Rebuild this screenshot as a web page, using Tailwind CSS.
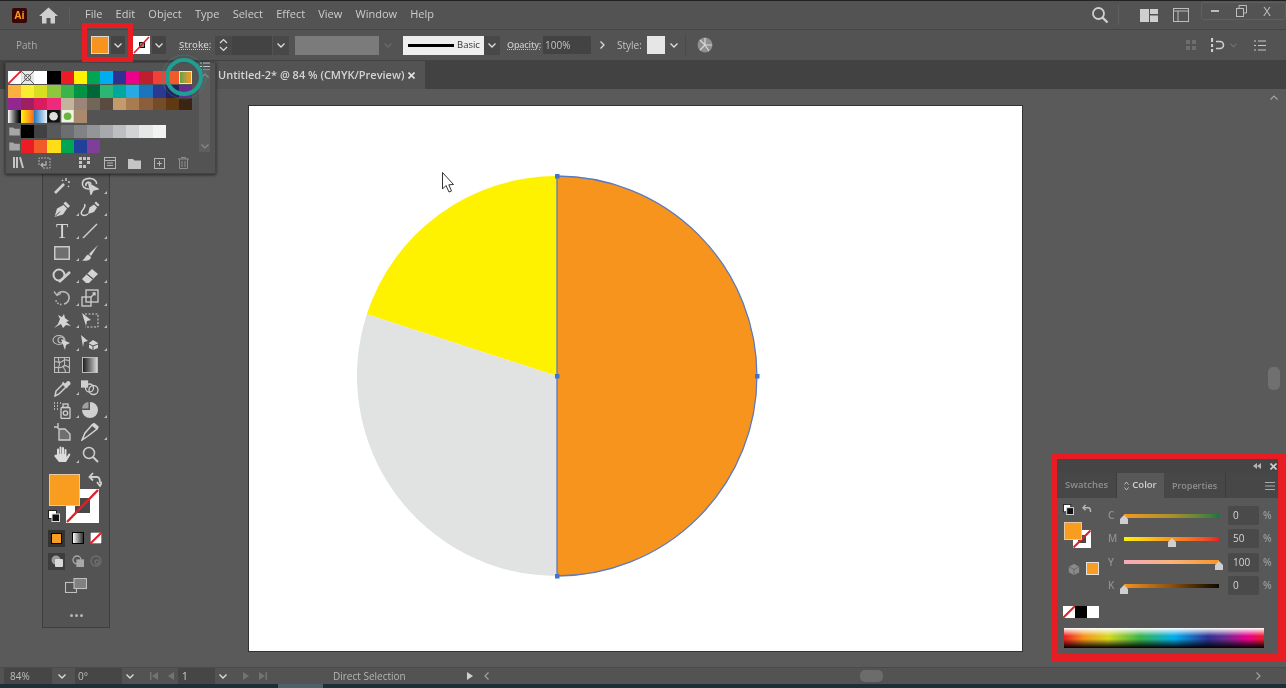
<!DOCTYPE html>
<html>
<head>
<meta charset="utf-8">
<script src="https://cdn.jsdelivr.net/npm/@tailwindcss/browser@4"></script>
</head>
<body class="m-0 overflow-hidden bg-[#535353]">
<div class="relative w-[1286px] h-[688px] overflow-hidden flex flex-col bg-[#5a5a5a] blur-[0.35px] font-['Open_Sans','Liberation_Sans',sans-serif] text-[#cfcfcf]">

  <!-- menu bar -->
  <header class="h-[30px] shrink-0 flex items-center bg-[#535353] border-t border-[#222] border-b border-b-[#454545]">
    <div class="ml-[12px] w-[15px] h-[15px] rounded-[2px] bg-[#3a0505] text-[#ff9a1a] text-[10px] font-bold leading-[15px] text-center">Ai</div>
    <svg class="ml-[12px] w-[19px] h-[17px]" viewBox="0 0 19 17" fill="#cfcfcf"><path d="M9.5 0.5 L19 9 H16 V16.5 H11.5 V11 H7.5 V16.5 H3 V9 H0 Z"/></svg>
    <div class="ml-[11px] w-px h-[16px] bg-[#5f5f5f]"></div>
    <nav class="ml-[15px] mb-[3px] flex items-center gap-[13.200px] text-[11px] leading-none text-[#cdcdcd]">
      <span>File</span><span>Edit</span><span>Object</span><span>Type</span><span>Select</span><span>Effect</span><span>View</span><span>Window</span><span>Help</span>
    </nav>
    <div class="ml-auto flex items-center">
      <svg class="w-[18px] h-[18px]" viewBox="0 0 18 18" fill="none" stroke="#cfcfcf" stroke-width="1.8"><circle cx="7.5" cy="7.5" r="5.5"/><path d="M11.5 11.5 L16.5 16.5" stroke-width="2.4"/></svg>
      <div class="ml-[9px] w-px h-[20px] bg-[#5f5f5f]"></div>
      <svg class="ml-[21px] w-[18px] h-[13px]" viewBox="0 0 18 13" fill="#cfcfcf"><rect x="0" y="0" width="9" height="13"/><rect x="10" y="0" width="8" height="5"/><rect x="10" y="6.5" width="8" height="6.5"/></svg>
      <svg class="ml-[15px] w-[16px] h-[14px]" viewBox="0 0 16 14" fill="none" stroke="#bdbdbd" stroke-width="1"><rect x="0.5" y="0.5" width="15" height="13"/><path d="M0.5 3H15.5M5 3V13.5"/></svg>
      <div class="ml-[12px] mb-[8px] w-[85px] h-[18px] flex items-center border border-[#5f5f5f] rounded-[2px] text-[#bdbdbd]">
        <span class="w-[26px] flex justify-center"><span class="w-[8px] h-[2px] bg-[#bdbdbd]"></span></span>
        <svg class="w-[26px] h-[12px]" viewBox="0 0 26 12" fill="none" stroke="#bdbdbd"><rect x="8.5" y="3.5" width="7" height="8"/><path d="M11 3V0.5H18.5V8H16"/></svg>
        <span class="w-[26px] text-center text-[13px] leading-none">X</span>
      </div>
    </div>
  </header>

  <!-- control bar -->
  <section class="h-[31px] shrink-0 flex items-center bg-[#535353] border-b border-[#424242] text-[10px] text-[#c4c4c4]">
    <span class="ml-[16px] w-[75px] text-[#a9a9a9]">Path</span>
    <div class="w-[18px] h-[18px] bg-[#f7941e] border border-[#d9d9d9]"></div>
    <div class="ml-[2px] w-[14px] h-[18px] bg-[#444] flex items-center justify-center"><svg class="w-[8px] h-[5px]" viewBox="0 0 8 5" fill="none" stroke="#ddd" stroke-width="1.3"><path d="M0.5 0.5L4 4L7.5 0.5"/></svg></div>
    <svg class="ml-[8px] w-[17px] h-[18px]" viewBox="0 0 17 18"><rect width="17" height="18" fill="#fff"/><rect x="6.500" y="6.500" width="5" height="5" fill="#888" stroke="#111"/><path d="M1 17L16 1" stroke="#e0202a" stroke-width="1.600"/></svg>
    <div class="ml-[2px] w-[14px] h-[18px] bg-[#444] flex items-center justify-center"><svg class="w-[8px] h-[5px]" viewBox="0 0 8 5" fill="none" stroke="#ddd" stroke-width="1.3"><path d="M0.5 0.5L4 4L7.5 0.5"/></svg></div>
    <span class="ml-[13px] w-[30px] font-semibold underline decoration-dotted text-[9.5px] text-[#c8c8c8]">Stroke:</span>
    <div class="ml-[6px] w-[17px] h-[19px] bg-[#484848] flex items-center justify-center"><svg class="w-[9px] h-[14px]" viewBox="0 0 9 14" fill="none" stroke="#ddd" stroke-width="1.2"><path d="M1 5L4.5 1.5L8 5M1 9L4.5 12.5L8 9"/></svg></div>
    <div class="w-[40px] h-[19px] bg-[#434343]"></div>
    <div class="ml-px w-[16px] h-[19px] bg-[#484848] flex items-center justify-center"><svg class="w-[8px] h-[5px]" viewBox="0 0 8 5" fill="none" stroke="#ddd" stroke-width="1.3"><path d="M0.5 0.5L4 4L7.5 0.5"/></svg></div>
    <div class="ml-[6px] w-[84px] h-[19px] bg-[#7b7b7b]"></div>
    <div class="w-[18px] flex justify-center"><svg class="w-[8px] h-[5px]" viewBox="0 0 8 5" fill="none" stroke="#6b6b6b" stroke-width="1.3"><path d="M0.5 0.5L4 4L7.5 0.5"/></svg></div>
    <div class="ml-[6px] w-[81px] h-[19px] bg-[#efefef] flex items-center text-[#333] text-[9.5px]">
      <span class="ml-[5px] w-[46px] h-[3px] bg-black"></span><span class="ml-[3px]">Basic</span>
    </div>
    <div class="w-[16px] h-[19px] bg-[#484848] flex items-center justify-center"><svg class="w-[8px] h-[5px]" viewBox="0 0 8 5" fill="none" stroke="#ddd" stroke-width="1.3"><path d="M0.5 0.5L4 4L7.5 0.5"/></svg></div>
    <span class="ml-[7px] w-[36px] underline decoration-dotted font-semibold text-[9px] tracking-[-0.2px]">Opacity:</span>
    <div class="w-[48px] h-[18px] bg-[#434343] pl-[2px] leading-[18px]">100%</div>
    <div class="w-[22px] flex justify-center"><svg class="w-[5px] h-[8px]" viewBox="0 0 5 8" fill="none" stroke="#ddd" stroke-width="1.3"><path d="M0.5 0.5L4 4L0.5 7.5"/></svg></div>
    <span class="ml-[4px] w-[30px]">Style:</span>
    <div class="w-[18px] h-[18px] bg-[#e6e6e6]"></div>
    <div class="w-[18px] flex justify-center"><svg class="w-[8px] h-[5px]" viewBox="0 0 8 5" fill="none" stroke="#ddd" stroke-width="1.3"><path d="M0.5 0.5L4 4L7.5 0.5"/></svg></div>
    <div class="ml-[2px] w-px h-[22px] bg-[#4a4a4a]"></div>
    <svg class="ml-[11px] w-[16px] h-[16px]" viewBox="0 0 16 16"><circle cx="8" cy="8" r="7.5" fill="#8f8f8f"/><path d="M8 1V8L3 3M8 8H15M8 8L12 14M8 8L3 13" stroke="#d8d8d8" stroke-width="1.2" fill="none"/></svg>
    <div class="ml-auto flex items-center">
      <svg class="w-[10px] h-[10px]" viewBox="0 0 10 10" fill="#6e6e6e"><rect width="4" height="4"/><rect x="6" width="4" height="4"/><rect y="6" width="4" height="4"/><rect x="6" y="6" width="4" height="4"/></svg>
      <svg class="ml-[15px] w-[14px] h-[14px]" viewBox="0 0 14 14" fill="none" stroke="#cfcfcf" stroke-width="1.6"><path d="M1 0V4M1 6V9M1 11V14" stroke-width="2.2"/><path d="M5 3.5H9A3.5 3.5 0 0 1 9 10.5H5"/></svg>
      <svg class="ml-[5px] w-[7px] h-[5px]" viewBox="0 0 8 5" fill="none" stroke="#777" stroke-width="1.2"><path d="M0.5 0.5L4 4L7.5 0.5"/></svg>
      <svg class="ml-[17px] mr-[20px] w-[12px] h-[11px]" viewBox="0 0 12 11" stroke="#c8c8c8" stroke-width="1.2"><path d="M0 1H2M4 1H12M0 5.5H2M4 5.5H12M0 10H2M4 10H12"/></svg>
    </div>
  </section>

  <!-- document tabs -->
  <section class="h-[28px] shrink-0 flex bg-[#424242]">
    <div class="ml-[210px] w-[215px] h-full bg-[#535353] flex items-center text-[11px] font-semibold text-[#d4d4d4]">
      <span class="ml-[8px]">Untitled-2* @ 84 % (CMYK/Preview)</span>
      <svg class="ml-auto mr-[10px] w-[7px] h-[7px]" viewBox="0 0 7 7" stroke="#e4e4e4" stroke-width="1.6"><path d="M0.5 0.5L6.5 6.5M6.5 0.5L0.5 6.5"/></svg>
    </div>
  </section>

  <!-- workspace -->
  <main class="relative flex-1 min-h-0 bg-[#5a5a5a]">
    <div class="relative ml-[249px] mt-[17px] w-[773px] h-[545px] bg-white shadow-[0_0_0_1px_#333]">
      <svg class="absolute inset-0 w-full h-full" viewBox="0 0 773 545">
        <path d="M308 270 V70 A200 200 0 0 0 117.8 208.2 Z" fill="#fff200"/>
        <path d="M308 270 L117.8 208.2 A200 200 0 0 0 308 470 Z" fill="#e1e3e3"/>
        <path d="M308 70 A200 200 0 0 1 308 470 Z" fill="#f7941e" stroke="#5b7bc0" stroke-width="1.3"/>
        <g fill="#3f74d0">
          <rect x="306" y="68" width="4.5" height="4.5"/><rect x="306" y="268" width="4.5" height="4.5"/>
          <rect x="506" y="268" width="4.5" height="4.5"/><rect x="306" y="468" width="4.5" height="4.5"/>
        </g>
        <path d="M193.500 66.500 V83 L197 79.500 L200 86 L202.500 85 L199.800 78.800 L204.500 78.500 Z" fill="#fff" stroke="#333" stroke-width="1"/>
      </svg>
    </div>

    <!-- vertical scrollbar -->
    <svg class="absolute right-[8px] top-[6px] w-[8px] h-[5px]" viewBox="0 0 8 5" fill="none" stroke="#a5a5a5" stroke-width="1.2"><path d="M0.5 4.500L4 1L7.5 4.500"/></svg>
    <div class="absolute left-[1268px] top-[278px] w-[12px] h-[23px] rounded-[5px] bg-[#707070]"></div>

    <!-- tools panel -->
    <aside class="absolute left-[42px] top-[0px] w-[68px] h-[539px] bg-[#535353] border border-[#3e3e3e]">
      <div class="absolute left-[5px] top-[85px] grid grid-cols-[28px_28px] auto-rows-[22.4px] place-items-center">
        <svg class="w-[18px] h-[18px]" viewBox="0 0 18 18" fill="#cfcfcf" stroke="#cfcfcf"><path d="M2 16L11 7" stroke-width="2.6"/><path d="M13 1V4M15 5H17M9 3L10 4M15 9L16 10" stroke-width="1.4"/></svg>
        <svg class="w-[18px] h-[18px]" viewBox="0 0 18 18" fill="none" stroke="#cfcfcf" stroke-width="1.6"><path d="M8 12C3 12 1 9 1.500 6C2 2 7 1 10 1.500C14 2 16 5 15.500 7"/><path d="M5 9C4 5 9 4 10 7" /><path d="M8 7L17 12L12 13L10 17Z" fill="#cfcfcf"/></svg>

        <svg class="w-[18px] h-[18px]" viewBox="0 0 18 18" fill="#d4d4d4"><path d="M1.500 17L4 8.500L10.500 5L14 8.500L10 14.500Z"/><path d="M10.500 3.500L12.500 1.500L17 6L15 8Z"/><path d="M2 16.500L7 11.500" stroke="#535353" stroke-width="1"/></svg>
        <svg class="w-[20px] h-[18px]" viewBox="0 0 20 18" fill="#d4d4d4"><path d="M8 14L9.500 7.500L14 4.500L17 7.500L14 12Z"/><path d="M14.500 3L16 1.500L19.500 5L18 6.500Z"/><path d="M8 14C3 17.500 0 14 2 11C4 8 6 7 4.500 4" fill="none" stroke="#d4d4d4" stroke-width="1.500"/></svg>

        <span class="text-[20px] leading-none font-['Liberation_Serif',serif] text-[#d6d6d6]">T</span>
        <svg class="w-[16px] h-[16px]" viewBox="0 0 16 16" stroke="#cfcfcf" stroke-width="1.5"><path d="M1 15L15 1"/></svg>

        <svg class="w-[16px] h-[14px]" viewBox="0 0 16 14"><rect x="0.750" y="0.750" width="14.500" height="12.500" fill="#6f6f6f" stroke="#c8c8c8" stroke-width="1.500"/></svg>
        <svg class="w-[18px] h-[18px]" viewBox="0 0 18 18" fill="#d4d4d4"><path d="M17 1L8 10L10 12Z"/><path d="M7 10.500L10 13C10 16 6 17.500 1 16.500C4 15.500 4 12 7 10.500Z"/></svg>

        <svg class="w-[20px] h-[18px]" viewBox="0 0 20 18" fill="none" stroke="#cfcfcf" stroke-width="2"><circle cx="7" cy="8" r="5.500"/><path d="M7 15L18 5" stroke-width="2.600"/></svg>
        <svg class="w-[18px] h-[16px]" viewBox="0 0 18 16" fill="#d4d4d4"><path d="M11 1L17 6L8 15H5L1 11Z"/><path d="M6 6L12 11" stroke="#535353" stroke-width="1.200"/></svg>

        <svg class="w-[18px] h-[18px]" viewBox="0 0 18 18" fill="none" stroke="#b8b8b8" stroke-width="1.600"><path d="M4 6C6 2 12 1.500 15 5C17.500 8.500 15.500 14 11 15" /><path d="M8.500 15.500C5 15.500 3 13 2.500 10" stroke-dasharray="1.500 1.500"/><path d="M1 2.500L4 6.500L8 4.500" stroke-width="1.300"/></svg>
        <svg class="w-[18px] h-[18px]" viewBox="0 0 18 18" fill="none" stroke="#cfcfcf" stroke-width="1.300"><rect x="1" y="8" width="9" height="9"/><rect x="5" y="1" width="12" height="12"/><path d="M10 8L14 4M11.500 4H14V6.500"/></svg>

        <svg class="w-[19px] h-[16px]" viewBox="0 0 19 16" fill="#d4d4d4"><path d="M1 15L5 11L7 6L5 2L9 4L11 1L12 5L16 8L13 9L18 13L13 12L10 15L8 11Z"/></svg>
        <svg class="w-[18px] h-[17px]" viewBox="0 0 18 17"><path d="M4 2H17V15H4" fill="none" stroke="#cfcfcf" stroke-dasharray="2 1.500"/><path d="M1 1L10 8L6 9L5 14Z" fill="#d4d4d4"/></svg>

        <svg class="w-[20px] h-[17px]" viewBox="0 0 20 17" fill="none" stroke="#bdbdbd" stroke-width="1.100"><ellipse cx="7" cy="6" rx="6" ry="4.500"/><circle cx="9" cy="6" r="3"/><path d="M9 5L18 9L14 11L13 16Z" fill="#d4d4d4" stroke="none"/></svg>
        <svg class="w-[20px] h-[15px]" viewBox="0 0 20 15" fill="#d4d4d4"><path d="M1 0L8 6L4 7L3 12Z"/><path d="M13 5L18 8V13L13 15L9 13V8Z"/><path d="M9 9L13 11L18 9M13 11V15" stroke="#535353" fill="none"/></svg>

        <svg class="w-[16px] h-[16px]" viewBox="0 0 16 16" fill="none" stroke="#bdbdbd" stroke-width="1.100"><rect x="0.500" y="0.500" width="15" height="15"/><path d="M0 5C4 3 3 7 7 5S10 2 16 4M0 11C4 9 5 12 8 10S12 8 16 11M5 0C3 4 7 5 5 9S6 13 4 16M11 0C9 4 12 6 10 9S13 12 11 16"/></svg>
        <div class="w-[16px] h-[16px] border border-[#bcbcbc] bg-gradient-to-r from-[#222] to-[#d8d8d8]"></div>

        <svg class="w-[18px] h-[18px]" viewBox="0 0 18 18" fill="none" stroke="#cfcfcf" stroke-width="1.500"><path d="M2 17L3 12L10 5L13 8L6 15Z"/><path d="M9.500 3.500L14.500 8.500M12 6L15 3A1.500 1.500 0 0 1 16.500 5L14 7" fill="#cfcfcf" stroke-width="2"/></svg>
        <svg class="w-[18px] h-[16px]" viewBox="0 0 18 16" fill="none" stroke="#cfcfcf" stroke-width="1.300"><rect x="0.500" y="1" width="6" height="6" fill="#cfcfcf"/><circle cx="8.500" cy="8" r="4"/><circle cx="12.500" cy="10" r="4.500"/></svg>

        <svg class="w-[18px] h-[18px]" viewBox="0 0 18 18" fill="none" stroke="#cfcfcf" stroke-width="1.300"><rect x="8" y="6.500" width="9" height="11" rx="1"/><circle cx="12.500" cy="12" r="2.200"/><rect x="10" y="3" width="5" height="3.500"/><path d="M1 2H2M4 2H5M7 2H8M1 5H2M4 5H5M1 8H2M4 8H5" stroke-width="1.600"/></svg>
        <svg class="w-[18px] h-[18px]" viewBox="0 0 18 18" fill="#d0d0d0"><path d="M9 9V1A8 8 0 1 1 1 9Z"/><path d="M7.500 7.500V1A7 7 0 0 0 1 7.500Z" fill="#a0a0a0"/></svg>

        <svg class="w-[18px] h-[18px]" viewBox="0 0 18 18" fill="none" stroke="#cfcfcf" stroke-width="1.300"><path d="M5 0V6M1 4H5"/><path d="M6 6H12L17 11V17H6Z" fill="#6f6f6f"/></svg>
        <svg class="w-[18px] h-[18px]" viewBox="0 0 18 18" fill="none" stroke="#d4d4d4" stroke-width="1.500"><path d="M11 2L16 6L7 13L1 17L4 10Z"/><path d="M11 2L13 0.500L17 4L16 6" fill="#d4d4d4"/></svg>

        <svg class="w-[18px] h-[19px]" viewBox="0 0 18 19" fill="#dcdcdc"><path d="M4 10V4.500A1 1 0 0 1 6 4.500V9H6.500V2.500A1 1 0 0 1 8.500 2.500V9H9V3A1 1 0 0 1 11 3V9H11.500V5A1 1 0 0 1 13.500 5V12L15.500 9C16.500 8 18 9 17 10.500L13 17H6L1.500 11.500C1 10 3 9 4 10Z"/></svg>
        <svg class="w-[17px] h-[17px]" viewBox="0 0 17 17" fill="none" stroke="#cfcfcf" stroke-width="1.500"><circle cx="7" cy="7" r="5.500"/><path d="M11 11L16 16" stroke-width="2"/></svg>
      </div>
      <!-- corner markers on tool buttons -->
      <svg class="absolute left-[0px] top-[85px] w-[66px] h-[292px]" viewBox="0 0 66 292" fill="#bdbdbd">
        <path d="M61 19h3v-3zM33 41h3v-3zM61 41h3v-3zM33 64h3v-3zM61 64h3v-3zM33 86h3v-3zM61 86h3v-3zM33 108h3v-3zM61 108h3v-3zM33 131h3v-3zM61 131h3v-3zM33 153h3v-3zM61 153h3v-3zM33 176h3v-3zM61 176h3v-3zM33 220h3v-3zM33 243h3v-3zM61 243h3v-3zM61 265h3v-3zM33 288h3v-3z"/>
      </svg>

      <div class="absolute left-[6px] top-[384px] w-[31px] h-[32px] bg-[#f99d20] border border-[#e8c9a0] z-10"></div>
      <svg class="absolute left-[23px] top-[399px] w-[33px] h-[34px]" viewBox="0 0 33 34"><rect width="33" height="34" fill="#fff"/><rect x="9" y="9" width="15" height="15" fill="#484848"/><path d="M1 33L32 1" stroke="#e0202a" stroke-width="2.400"/></svg>
      <svg class="absolute left-[45px] top-[382px] w-[14px] h-[15px]" viewBox="0 0 14 15" fill="none" stroke="#cfcfcf" stroke-width="1.800"><path d="M2 5H9C12 5 12 8 12 11"/><path d="M5 1L1.500 5L5 8.500M9 10L12 14L14 10" /></svg>
      <svg class="absolute left-[5px] top-[420px] w-[12px] h-[12px]" viewBox="0 0 12 12"><rect x="0.500" y="0.500" width="8" height="8" fill="#fff" stroke="#222"/><rect x="4" y="4" width="7.500" height="7.500" fill="#111" stroke="#ddd"/></svg>

      <div class="absolute left-[5px] top-[439px] w-[56px] h-[18px] flex items-center justify-between">
        <div class="w-[17px] h-[17px] bg-[#333] flex items-center justify-center"><div class="w-[11px] h-[11px] bg-[#f99d20] border border-black"></div></div>
        <div class="w-[12px] h-[12px] border border-black bg-gradient-to-r from-white to-[#333]"></div>
        <svg class="mr-[2px] w-[12px] h-[12px]" viewBox="0 0 12 12"><rect width="12" height="12" fill="#fff" stroke="#111"/><path d="M0 12L12 0" stroke="#e0202a" stroke-width="2"/></svg>
      </div>
      <div class="absolute left-[5px] top-[462px] w-[56px] h-[18px] flex items-center justify-between">
        <div class="w-[17px] h-[17px] bg-[#3d3d3d] flex items-center justify-center"><svg class="w-[12px] h-[12px]" viewBox="0 0 12 12"><circle cx="5" cy="5" r="4.500" fill="#9a9a9a"/><rect x="4" y="4" width="8" height="8" rx="1" fill="#d8d8d8"/></svg></div>
        <svg class="w-[12px] h-[12px]" viewBox="0 0 12 12" fill="none" stroke="#a8a8a8" stroke-width="1.300"><circle cx="5" cy="5" r="4"/><rect x="5" y="5" width="6.500" height="6.500" fill="#a8a8a8"/></svg>
        <svg class="mr-[2px] w-[12px] h-[12px]" viewBox="0 0 12 12" fill="none" stroke="#6f6f6f" stroke-width="1.300"><circle cx="6" cy="6" r="5"/><circle cx="7" cy="7" r="2"/></svg>
      </div>
      <svg class="absolute left-[22px] top-[488px] w-[22px] h-[15px]" viewBox="0 0 22 15" fill="none" stroke="#c0c0c0" stroke-width="1.100"><rect x="0.500" y="4.500" width="11" height="10"/><rect x="9" y="0.500" width="12.500" height="10" fill="#808080"/></svg>
      <div class="absolute left-[27px] top-[524px] flex gap-[2px]"><span class="w-[3px] h-[3px] rounded-full bg-[#b5b5b5]"></span><span class="w-[3px] h-[3px] rounded-full bg-[#b5b5b5]"></span><span class="w-[3px] h-[3px] rounded-full bg-[#b5b5b5]"></span></div>
    </aside>

    <!-- color panel with annotation -->
    <aside class="absolute left-[1052px] top-[364px] w-[233px] h-[208px] border-[5px] border-t-[6px] border-r-[7px] border-b-[7px] border-[#e81c23] bg-[#585858] text-[#a8a8a8]">
      <div class="h-[14px] bg-[#454545] flex items-center justify-end">
        <svg class="mr-[9px] w-[8px] h-[6px]" viewBox="0 0 8 6" fill="#b5b5b5"><path d="M4 0V6L0 3ZM8 0V6L4 3Z"/></svg>
        <svg class="mr-[1px] w-[7px] h-[7px]" viewBox="0 0 7 7" stroke="#d0d0d0" stroke-width="1.600"><path d="M0.500 0.500L6.500 6.500M6.500 0.500L0.500 6.500"/></svg>
      </div>
      <div class="h-[25px] bg-[#474747] flex items-center text-[9.500px] font-semibold">
        <div class="w-[60px] h-full flex items-center justify-center text-[#8f8f8f] border-r border-[#3c3c3c]">Swatches</div>
        <div class="w-[47px] h-full bg-[#585858] flex items-center justify-center gap-[3px] text-[#d2d2d2]"><svg class="w-[5px] h-[10px]" viewBox="0 0 5 10" fill="none" stroke="#bbb"><path d="M0.500 3.500L2.500 1L4.500 3.500M0.500 6.500L2.500 9L4.500 6.500"/></svg>Color</div>
        <div class="w-[62px] h-full flex items-center justify-center text-[#8f8f8f] border-r border-[#3c3c3c] text-[9px]">Properties</div>
        <svg class="ml-auto mr-[3px] w-[10px] h-[8px]" viewBox="0 0 10 8" stroke="#aaa"><path d="M0 0.500H10M0 4H10M0 7.500H10"/></svg>
      </div>
      <div class="relative h-[156px]">
        <svg class="absolute left-[6px] top-[6px] w-[11px] h-[11px]" viewBox="0 0 12 12"><rect x="0.500" y="0.500" width="8" height="8" fill="#fff" stroke="#222"/><rect x="4" y="4" width="7.500" height="7.500" fill="#111" stroke="#ddd"/></svg>
        <svg class="absolute left-[25px] top-[6px] w-[10px] h-[11px]" viewBox="0 0 14 15" fill="none" stroke="#b8b8b8" stroke-width="2"><path d="M2 5H9C12 5 12 8 12 11"/><path d="M5 1L1.500 5L5 8.500"/></svg>
        <svg class="absolute left-[16px] top-[32px] w-[18px] h-[18px]" viewBox="0 0 18 18"><rect width="18" height="18" fill="#fff"/><rect x="5" y="5" width="8" height="8" fill="#484848"/><path d="M0.500 17.500L17.500 0.500" stroke="#e0202a" stroke-width="2"/></svg>
        <div class="absolute left-[7px] top-[24px] w-[18px] h-[18px] bg-[#f99d20] border border-[#e8c9a0]"></div>
        <svg class="absolute left-[11px] top-[65px] w-[12px] h-[13px]" viewBox="0 0 12 13" fill="#8a8a8a" stroke="#555" stroke-width=".6"><path d="M6 0.500L11.500 3.500V9.500L6 12.500L0.500 9.500V3.500Z"/><path d="M0.500 3.500L6 6.500L11.500 3.500M6 6.500V12.500" fill="none"/></svg>
        <div class="absolute left-[29px] top-[64px] w-[13px] h-[13px] bg-[#f99d20] border border-[#e2e2e2]"></div>

        <div class="absolute left-[48px] top-[6px] grid grid-cols-[19px_95px_9px_31px_8px] auto-rows-[23.300px] items-center text-[10px] font-semibold">
          <span class="pl-[3px] text-[#8f8f8f]">C</span>
          <div class="relative h-[4px] bg-gradient-to-r from-[#f39a20] via-[#a9902a] to-[#0a7a3d]"><svg class="absolute left-[-5px] top-[1px] w-[10px] h-[9px]" viewBox="0 0 10 9" fill="#cfcfcf"><path d="M5 0L9 4V9H1V4Z"/></svg></div><span></span>
          <div class="h-[19px] bg-[#4a4a4a] rounded-[2px] pl-[5px] leading-[18px] font-normal text-[#d4d4d4]">0</div><span class="ml-[4px] text-[#999]">%</span>

          <span class="pl-[3px] text-[#8f8f8f]">M</span>
          <div class="relative h-[4px] bg-gradient-to-r from-[#fff200] via-[#f7941e] to-[#ed1c24]"><svg class="absolute left-[43px] top-[1px] w-[10px] h-[9px]" viewBox="0 0 10 9" fill="#cfcfcf"><path d="M5 0L9 4V9H1V4Z"/></svg></div><span></span>
          <div class="h-[19px] bg-[#4a4a4a] rounded-[2px] pl-[5px] leading-[18px] font-normal text-[#d4d4d4]">50</div><span class="ml-[4px] text-[#999]">%</span>

          <span class="pl-[3px] text-[#8f8f8f]">Y</span>
          <div class="relative h-[4px] bg-gradient-to-r from-[#f7a8b8] via-[#f7b37a] to-[#f7941e]"><svg class="absolute left-[90px] top-[1px] w-[10px] h-[9px]" viewBox="0 0 10 9" fill="#cfcfcf"><path d="M5 0L9 4V9H1V4Z"/></svg></div><span></span>
          <div class="h-[19px] bg-[#4a4a4a] rounded-[2px] pl-[5px] leading-[18px] font-normal text-[#d4d4d4]">100</div><span class="ml-[4px] text-[#999]">%</span>

          <span class="pl-[3px] text-[#8f8f8f]">K</span>
          <div class="relative h-[4px] bg-gradient-to-r from-[#f7941e] via-[#8a5210] to-[#120800]"><svg class="absolute left-[-5px] top-[1px] w-[10px] h-[9px]" viewBox="0 0 10 9" fill="#cfcfcf"><path d="M5 0L9 4V9H1V4Z"/></svg></div><span></span>
          <div class="h-[19px] bg-[#4a4a4a] rounded-[2px] pl-[5px] leading-[18px] font-normal text-[#d4d4d4]">0</div><span class="ml-[4px] text-[#999]">%</span>
        </div>

        <div class="absolute left-[6px] top-[108px] flex">
          <svg class="w-[12px] h-[12px]" viewBox="0 0 12 12"><rect width="12" height="12" fill="#fff"/><path d="M0 12L12 0" stroke="#e0202a" stroke-width="2"/></svg>
          <span class="w-[12px] h-[12px] bg-black"></span>
          <span class="w-[12px] h-[12px] bg-white"></span>
        </div>
        <div class="absolute left-[7px] top-[130px] w-[200px] h-[20px] bg-[linear-gradient(90deg,#ed1c24_0%,#f7941e_10%,#d8d820_22%,#39b54a_38%,#00aeef_55%,#2e3192_72%,#662d91_80%,#ec008c_92%,#ed1c24_100%)]">
          <div class="absolute inset-0 bg-[linear-gradient(180deg,#fff_0%,transparent_40%,transparent_55%,#000_100%)]"></div>
        </div>
      </div>
    </aside>
  </main>

  <!-- status bar -->
  <footer class="h-[17px] shrink-0 flex items-center bg-[#535353] border-t border-[#4a4a4a] text-[10px] text-[#bdbdbd]">
    <div class="ml-[4px] w-[48px] h-[16px] bg-[#464646] pl-[6px] leading-[16px]">84%</div>
    <div class="w-[19px] flex justify-center"><svg class="w-[8px] h-[5px]" viewBox="0 0 8 5" fill="none" stroke="#ddd" stroke-width="1.300"><path d="M0.500 0.500L4 4L7.500 0.500"/></svg></div>
    <div class="ml-[4px] w-[47px] h-[16px] bg-[#464646] pl-[3px] leading-[16px]">0°</div>
    <div class="w-[16px] flex justify-center"><svg class="w-[8px] h-[5px]" viewBox="0 0 8 5" fill="none" stroke="#ddd" stroke-width="1.300"><path d="M0.500 0.500L4 4L7.500 0.500"/></svg></div>
    <svg class="ml-[12px] w-[30px] h-[8px]" viewBox="0 0 30 8" fill="#737373"><path d="M0 0H1.500V8H0ZM8 0V8L2 4ZM24 0V8L18 4Z"/></svg>
    <div class="ml-[-2px] w-[37px] h-[16px] bg-[#464646] pl-[4px] leading-[16px] text-[#d0d0d0]">1</div>
    <div class="w-[16px] flex justify-center"><svg class="w-[8px] h-[5px]" viewBox="0 0 8 5" fill="none" stroke="#ddd" stroke-width="1.300"><path d="M0.500 0.500L4 4L7.500 0.500"/></svg></div>
    <svg class="ml-[12px] w-[24px] h-[8px]" viewBox="0 0 24 8" fill="#737373"><path d="M0 0V8L6 4ZM16 0V8L22 4ZM22.500 0H24V8H22.500Z"/></svg>
    <span class="ml-[66px] w-[134px] text-[#b5b5b5]">Direct Selection</span>
    <svg class="w-[6px] h-[8px]" viewBox="0 0 6 8" fill="#d0d0d0"><path d="M0 0V8L6 4Z"/></svg>
    <svg class="ml-[11px] w-[5px] h-[8px]" viewBox="0 0 5 8" fill="none" stroke="#a0a0a0" stroke-width="1.200"><path d="M4.500 0.500L1 4L4.500 7.500"/></svg>
    <div class="ml-[371px] w-[23px] h-[12px] rounded-[5px] bg-[#6c6c6c]"></div>
    <svg class="ml-[373px] w-[5px] h-[8px]" viewBox="0 0 5 8" fill="none" stroke="#a0a0a0" stroke-width="1.200"><path d="M0.500 0.500L4 4L0.500 7.500"/></svg>
  </footer>
  <div class="h-[4px] shrink-0 bg-[#1b2f36] flex"><div class="ml-[278px] w-[45px] h-full bg-[#4c626a]"></div></div>

  <!-- swatches dropdown (floats above the tool panel and the tab strip) -->
  <div class="absolute left-[5px] top-[62px] w-[211px] h-[112px] bg-[#535353] shadow-[0_1px_3px_rgba(0,0,0,0.6)] border border-[#444]">
    <svg class="absolute left-[194px] top-[-1px] w-[10px] h-[9px]" viewBox="0 0 10 9" stroke="#c4c4c4"><path d="M0 1H2M3 1H10M0 4.500H2M3 4.500H10M0 8H2M3 8H10"/></svg>
    <div class="absolute left-[2px] top-[8px] flex flex-col">
      <div class="flex h-[13px] [&>*]:w-[13.150px] [&>*]:h-[13px] [&>*]:shrink-0">
        <svg viewBox="0 0 13 13"><rect width="13" height="13" fill="#fff"/><path d="M0 13L13 0" stroke="#e0202a" stroke-width="1.800"/></svg>
        <svg viewBox="0 0 13 13"><rect width="13" height="13" fill="#e8e8e8"/><path d="M0 0L13 13M13 0L0 13" stroke="#555"/><circle cx="6.500" cy="6.500" r="3" fill="none" stroke="#555"/></svg>
        <span class="bg-white"></span><span class="bg-black"></span><span class="bg-[#ed1c24]"></span><span class="bg-[#fff200]"></span><span class="bg-[#00a651]"></span><span class="bg-[#00aeef]"></span><span class="bg-[#2e3192]"></span><span class="bg-[#ec008c]"></span><span class="bg-[#be1e2d]"></span><span class="bg-[#ef4136]"></span><span class="bg-[#f15a29]"></span>
        <span class="border border-[#e8e8e8] bg-gradient-to-r from-[#5fa04a] to-[#f7941e]"></span>
      </div>
      <div class="mt-[1px] flex h-[12.500px] [&>*]:w-[13.150px] [&>*]:h-[12.500px] [&>*]:shrink-0">
        <span class="bg-[#fbb040]"></span><span class="bg-[#f9ed32]"></span><span class="bg-[#d7df23]"></span><span class="bg-[#8dc63f]"></span><span class="bg-[#39b54a]"></span><span class="bg-[#009444]"></span><span class="bg-[#006838]"></span><span class="bg-[#2bb673]"></span><span class="bg-[#00a79d]"></span><span class="bg-[#27aae1]"></span><span class="bg-[#1c75bc]"></span><span class="bg-[#2b3990]"></span><span class="bg-[#262262]"></span><span class="bg-[#662d91]"></span>
      </div>
      <div class="flex h-[12.500px] [&>*]:w-[13.150px] [&>*]:h-[12.500px] [&>*]:shrink-0">
        <span class="bg-[#92278f]"></span><span class="bg-[#9e1f63]"></span><span class="bg-[#da1c5c]"></span><span class="bg-[#ee2a7b]"></span><span class="bg-[#c2b59b]"></span><span class="bg-[#9b8579]"></span><span class="bg-[#726658]"></span><span class="bg-[#594a42]"></span><span class="bg-[#c49a6c]"></span><span class="bg-[#a97c50]"></span><span class="bg-[#8b5e3c]"></span><span class="bg-[#754c29]"></span><span class="bg-[#603913]"></span><span class="bg-[#3c2415]"></span>
      </div>
      <div class="flex h-[12.500px] [&>*]:w-[13.150px] [&>*]:h-[12.500px] [&>*]:shrink-0">
        <span class="bg-gradient-to-r from-white to-black"></span>
        <span class="bg-gradient-to-r from-[#fff200] to-[#f7641e]"></span>
        <span class="bg-gradient-to-r from-[#1c75bc] to-[#e8f4fa]"></span>
        <svg viewBox="0 0 13 13"><rect width="13" height="13" fill="#111"/><circle cx="6.500" cy="6.500" r="4.500" fill="#ddd"/></svg>
        <svg viewBox="0 0 13 13"><rect width="13" height="13" fill="#eef4e4"/><circle cx="6.500" cy="6.500" r="4" fill="#6cb33f"/></svg>
        <span class="bg-[#a98a6d]"></span>
      </div>
      <div class="mt-[2.500px] flex h-[12.500px] [&>*]:w-[13.150px] [&>*]:h-[12.500px] [&>*]:shrink-0">
        <svg viewBox="0 0 13 13" fill="#a6a6a6"><path d="M1 2.500H5L6.500 4H12V11H1Z"/></svg>
        <span class="bg-black"></span><span class="bg-[#414042]"></span><span class="bg-[#58595b]"></span><span class="bg-[#6d6e71]"></span><span class="bg-[#808285]"></span><span class="bg-[#939598]"></span><span class="bg-[#a7a9ac]"></span><span class="bg-[#bcbec0]"></span><span class="bg-[#d1d3d4]"></span><span class="bg-[#e6e7e8]"></span><span class="bg-[#f1f2f2]"></span>
      </div>
      <div class="mt-[2.500px] flex h-[12.500px] [&>*]:w-[13.150px] [&>*]:h-[12.500px] [&>*]:shrink-0">
        <svg viewBox="0 0 13 13" fill="#a6a6a6"><path d="M1 2.500H5L6.500 4H12V11H1Z"/></svg>
        <span class="bg-[#ed1c24]"></span><span class="bg-[#f15a29]"></span><span class="bg-[#ffde17]"></span><span class="bg-[#00a651]"></span><span class="bg-[#21409a]"></span><span class="bg-[#7f3f98]"></span>
      </div>
    </div>
    <!-- swatch list scrollbar -->
    <div class="absolute left-[193px] top-[7px] w-[11px] h-[82px] bg-[#5e5e5e] flex flex-col items-center justify-between py-[3px]">
      <svg class="w-[8px] h-[5px]" viewBox="0 0 8 5" fill="none" stroke="#8a8a8a" stroke-width="1.200"><path d="M0.500 4.500L4 1L7.500 4.500"/></svg>
      <svg class="w-[8px] h-[5px]" viewBox="0 0 8 5" fill="none" stroke="#8a8a8a" stroke-width="1.200"><path d="M0.500 0.500L4 4L7.500 0.500"/></svg>
    </div>
    <!-- footer icons -->
    <div class="absolute left-[7px] top-[93px] flex items-center h-[14px]">
      <svg class="w-[13px] h-[12px]" viewBox="0 0 13 12" fill="#c4c4c4"><path d="M0 0H2V11H0ZM3 0H5V11H3ZM6 0.500L8 0L11 11H9Z"/></svg>
      <svg class="ml-[12px] w-[13px] h-[12px]" viewBox="0 0 13 12" fill="none" stroke="#b0b0b0"><path d="M1 8V1H12V11H5" stroke-dasharray="2 1"/><path d="M8 4V8H3M5 6L3 8L5 10" stroke-width="1.300"/></svg>
      <svg class="ml-[28px] w-[12px] h-[12px]" viewBox="0 0 12 12" fill="#c4c4c4"><path d="M0 0H3V3H0ZM4 0H7V3H4ZM8 0H11V3H8ZM0 4H3V7H0ZM8 4H11V7H8ZM0 8H3V11H0ZM4 8H7V11H4Z"/></svg>
      <svg class="ml-[13px] w-[12px] h-[12px]" viewBox="0 0 12 12" fill="none" stroke="#b5b5b5"><rect x="0.500" y="0.500" width="11" height="11"/><path d="M0.500 3.500H11.500M3 6H9M3 8.500H9"/></svg>
      <svg class="ml-[12px] w-[13px] h-[11px]" viewBox="0 0 13 11" fill="#c4c4c4"><path d="M0 1H5L6.500 2.500H13V11H0Z"/></svg>
      <svg class="ml-[13px] w-[11px] h-[11px]" viewBox="0 0 11 11" fill="none" stroke="#b5b5b5"><rect x="0.500" y="0.500" width="10" height="10"/><path d="M5.500 3V8M3 5.500H8"/></svg>
      <svg class="ml-[13px] w-[11px] h-[12px]" viewBox="0 0 11 12" fill="none" stroke="#8f8f8f"><path d="M0 2H11M3.500 2V0.500H7.500V2M1.500 2V11.500H9.500V2M4 4V10M7 4V10"/></svg>
    </div>
  </div>

  <!-- annotation over the fill control -->
  <div class="absolute left-[82px] top-[23px] w-[51px] h-[39px] border-[5px] border-[#e81c23]"></div>
  <svg class="absolute left-[155px] top-[51px] w-[56px] h-[52px]" viewBox="0 0 56 52" fill="none"><circle cx="29" cy="26" r="17" stroke="#1f9e94" stroke-width="4"/><circle cx="29" cy="26" r="22" stroke="#1f9e94" stroke-opacity=".4" stroke-width="1"/></svg>
</div>
</body>
</html>
